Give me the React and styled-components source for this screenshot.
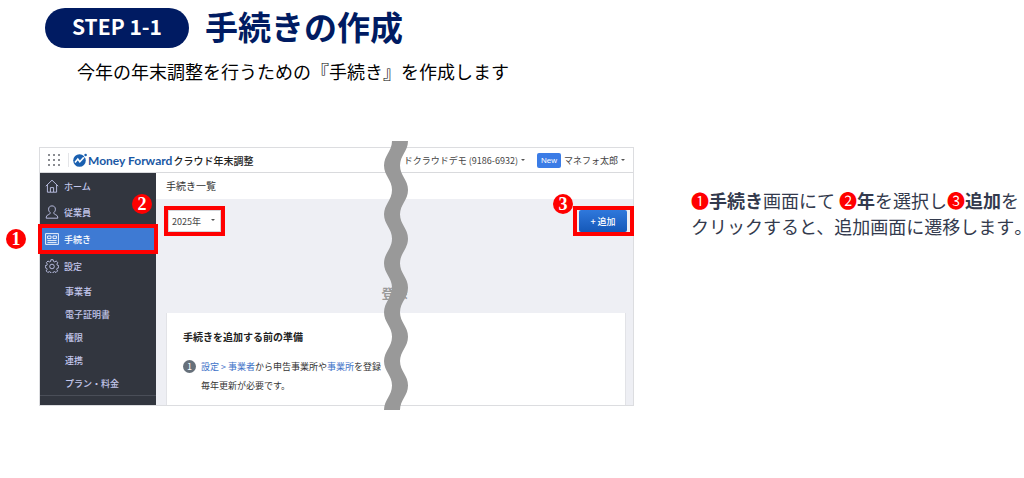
import styled, { createGlobalStyle, css } from 'styled-components';

const mainNav = [
  { id: 'home', label: 'ホーム' },
  { id: 'staff', label: '従業員' },
  { id: 'procedure', label: '手続き', active: true },
  { id: 'settings', label: '設定' },
];

const subNav = ['事業者', '電子証明書', '権限', '連携', 'プラン・料金'];

const icons = {
  home: (
    <>
      <path d="M0.8 7.2 7 1.2l6.2 6" />
      <path d="M2.4 6v7.2h9.2V6" />
      <path d="M5.4 13V8.6h3.2V13" />
    </>
  ),
  staff: (
    <>
      <path d="M5.2 7.6C3.9 6.6 3.6 5.2 3.6 4.2 3.6 2 5.1 0.9 7 0.9s3.4 1.1 3.4 3.3c0 1-.3 2.4-1.6 3.4" />
      <path d="M5.2 7.6c0 1.2-.6 1.7-2 2.2C1.6 10.4 1.3 11.4 1.2 13.2h11.6c-.1-1.8-.4-2.8-2-3.4-1.4-.5-2-1-2-2.2" />
    </>
  ),
  procedure: (
    <>
      <path d="M0.6 1.6h12.8v10.8H0.6z" />
      <path d="M2.6 4h3.4v2.6H2.6zM8 4h3.4v2.6H8z" />
      <path d="M2.4 8.6h9.2M2.4 10.6h9.2" />
    </>
  ),
  settings: (
    <>
      <path d="M5.9 0.7h2.2l.4 1.7 1.2.5 1.5-.9 1.6 1.6-.9 1.5.5 1.2 1.3.3v2.2l-1.5.4-.5 1.2.9 1.5-1.6 1.6-1.5-.9-1.2.5-.4 1.2H5.9l-.4-1.2-1.2-.5-1.5.9-1.6-1.6.9-1.5-.5-1.2-1.3-.4V6.6l1.5-.3.5-1.2-.9-1.5L3 2l1.5.9 1.2-.5z" />
      <circle cx="7" cy="7.5" r="2.3" />
    </>
  ),
};

// One wavy band: every half period the edge swings between left and right.
const HALF = 24.5;
const wavePath = () => {
  let d = 'M8 0';
  for (let i = 0; i < 11; i += 1) {
    const from = i % 2 ? 0 : 8;
    const to = i % 2 ? 8 : 0;
    const y = i * HALF;
    d += `C${from} ${y + 10} ${to} ${y + HALF - 10} ${to} ${y + HALF}`;
  }
  d += 'H16';
  for (let i = 10; i >= 0; i -= 1) {
    const from = i % 2 ? 24 : 16;
    const to = i % 2 ? 16 : 24;
    const y = i * HALF;
    d += `C${from} ${y + HALF - 10} ${to} ${y + 10} ${to} ${y}`;
  }
  return `${d}Z`;
};

const App = () => (
  <>
    <GlobalStyle />
    <Page>
      <Header>
        <Step>STEP 1-1</Step>
        <Title>手続きの作成</Title>
      </Header>
      <Lead>今年の年末調整を行うための『手続き』を作成します</Lead>
      <Body>
        <Frame>
          <TopBar>
            <AppsButton type="button" aria-label="アプリ">
              <svg width="14" height="14" viewBox="0 0 14 14" fill="#8b8d92">
                {[1, 6, 11].map((y) =>
                  [1, 6, 11].map((x) => (
                    <rect key={`${x}-${y}`} x={x} y={y} width="2" height="2" />
                  ))
                )}
              </svg>
            </AppsButton>
            <Brand href="#top">
              <svg width="15" height="14" viewBox="0 0 15 14">
                <circle cx="6.5" cy="7.5" r="6.3" fill="#1a60b0" />
                <path d="M9.8 0 15 0v5.5l-3.4-.8z" fill="#fff" />
                <path d="M2 9.6 4.8 6l2 2.8 4-4.4" fill="none" stroke="#fff" strokeWidth="1.6" />
                <circle cx="12.6" cy="2" r="1.3" fill="#1a60b0" />
              </svg>
              <BrandName>Money Forward</BrandName>
              <Product>クラウド年末調整</Product>
            </Brand>
            <Account>
              <MenuButton type="button">
                ドクラウドデモ (9186-6932)
                <Caret />
              </MenuButton>
              <NewTag>New</NewTag>
              <MenuButton type="button">
                マネフォ太郎
                <Caret />
              </MenuButton>
            </Account>
          </TopBar>
          <Columns>
            <Sidebar>
              {mainNav.map(({ id, label, active }) => (
                <NavItem key={id} href={`#${id}`} $active={active}>
                  <NavIcon viewBox="0 0 14 14">{icons[id]}</NavIcon>
                  {label}
                  {active && <Badge $left={-34} $top={4}>1</Badge>}
                </NavItem>
              ))}
              <SubNav>
                {subNav.map((label) => (
                  <SubItem key={label} href="#settings">{label}</SubItem>
                ))}
              </SubNav>
            </Sidebar>
            <Main>
              <PageTitle>手続き一覧</PageTitle>
              <Toolbar>
                <Highlight>
                  <YearSelect aria-label="年" defaultValue="2025">
                    <option value="2025">2025年</option>
                  </YearSelect>
                  <SelectCaret />
                  <Badge $left={-36} $top={-16}>2</Badge>
                </Highlight>
                <Highlight $wide>
                  <AddButton type="button">+ 追加</AddButton>
                  <Badge $left={-24} $top={-16}>3</Badge>
                </Highlight>
              </Toolbar>
              <Empty>登録</Empty>
              <Card>
                <CardTitle>手続きを追加する前の準備</CardTitle>
                <Preparation>
                  <Count>1</Count>
                  <p>
                    <a href="#office">設定 &gt; 事業者</a>から申告事業所や<a href="#branch">事業所</a>を登録
                    <br />
                    毎年更新が必要です。
                  </p>
                </Preparation>
              </Card>
            </Main>
          </Columns>
          <Wave viewBox="0 0 24 269.5" preserveAspectRatio="none" aria-hidden="true">
            <path d={wavePath()} fill="#999" />
          </Wave>
        </Frame>
        <Note>
          <Mark>❶</Mark><b>手続き</b>画面にて <Mark>❷</Mark><b>年</b>を選択し<Mark>❸</Mark><b>追加</b>を
          <br />
          クリックすると、追加画面に遷移します<Stop>。</Stop>
        </Note>
      </Body>
    </Page>
  </>
);

const GlobalStyle = createGlobalStyle`
  * {
    box-sizing: border-box;
  }
  body {
    margin: 0;
    background: #ffffff;
    font-family: "Noto Sans CJK JP", sans-serif;
  }
  h1, h2, h3, p {
    margin: 0;
  }
  a {
    text-decoration: none;
  }
  button, select {
    font-family: inherit;
  }
`;

const Page = styled.main`
  padding: 8px 0 24px;
`;

const Header = styled.header`
  display: flex;
  align-items: flex-start;
  gap: 16px;
  padding-left: 45px;
`;

const Step = styled.span`
  padding: 0 27px 4px;
  border-radius: 20px;
  background: #001b62;
  color: #ffffff;
  font-size: 21px;
  font-weight: 700;
  line-height: 36px;
`;

const Title = styled.h1`
  color: #001b62;
  font-size: 33px;
  font-weight: 700;
  line-height: 36px;
`;

const Lead = styled.p`
  margin-top: 10px;
  padding-left: 77px;
  color: #000000;
  font-size: 18px;
  line-height: 26px;
`;

const Body = styled.div`
  display: grid;
  grid-template-columns: minmax(0, 595fr) minmax(0, 333fr);
  gap: 57px;
  align-items: start;
  margin-top: 63px;
  padding-left: 39px;
`;

const Frame = styled.section`
  position: relative;
  border: 1px solid #dcdde0;
  background: #ffffff;
`;

const TopBar = styled.div`
  display: flex;
  align-items: center;
  height: 25px;
  padding: 0 8px 0 7px;
  border-bottom: 1px solid #d9dadd;
`;

const AppsButton = styled.button`
  display: flex;
  padding: 0 7px 0 0;
  border: 0;
  border-right: 1px solid #e4e5e8;
  background: none;
`;

const Brand = styled.a`
  display: flex;
  align-items: center;
  padding-left: 4px;
  white-space: nowrap;
`;

const BrandName = styled.span`
  margin-right: 1px;
  color: #1a58a4;
  font-family: Lato, sans-serif;
  font-size: 12px;
  font-weight: 700;
`;

const Product = styled.span`
  color: #222222;
  font-size: 10px;
  font-weight: 500;
`;

const Account = styled.div`
  display: flex;
  align-items: center;
  margin-left: auto;
  white-space: nowrap;
`;

const MenuButton = styled.button`
  display: flex;
  align-items: center;
  gap: 3px;
  padding: 0;
  border: 0;
  background: none;
  color: #444444;
  font-size: 9px;
`;

const caretShape = css`
  border: 2px solid transparent;
  border-top-color: #555555;
  border-bottom: 0;
`;

const Caret = styled.span`
  ${caretShape}
`;

const NewTag = styled.span`
  margin: 0 3px 0 12px;
  padding: 0 4px;
  border-radius: 2px;
  background: #3b7ce6;
  color: #ffffff;
  font-family: "Liberation Sans", sans-serif;
  font-size: 8px;
  line-height: 15px;
`;

const Columns = styled.div`
  display: flex;
`;

const Sidebar = styled.nav`
  flex: none;
  width: 116px;
  padding-bottom: 9px;
  background: #32363f;
`;

const NavItem = styled.a`
  position: relative;
  display: flex;
  align-items: center;
  gap: 5px;
  height: ${({ $active }) => ($active ? 28 : 26)}px;
  padding-left: 5px;
  background: ${({ $active }) => ($active ? '#3e7ad3' : 'none')};
  color: ${({ $active }) => ($active ? '#ffffff' : '#c3c7ec')};
  font-size: 9px;
  font-weight: 500;
  ${({ $active }) =>
    $active &&
    css`
      &::after {
        content: '';
        position: absolute;
        inset: -1px -2px;
        border: 4px solid #ff0000;
      }
    `}
`;

const NavIcon = styled.svg`
  width: 14px;
  height: 14px;
  fill: none;
  stroke: currentColor;
  stroke-width: 0.9;
`;

const SubNav = styled.div`
  padding-top: 1px;
  border-bottom: 1px solid #4a4e58;
`;

const SubItem = styled.a`
  display: block;
  padding-left: 25px;
  color: #c3c7ec;
  font-size: 9px;
  font-weight: 500;
  line-height: 23px;
`;

const Main = styled.div`
  display: flex;
  flex: 1;
  flex-direction: column;
  min-width: 0;
  background: #eeeff4;
`;

const PageTitle = styled.h2`
  padding-left: 10px;
  background: #ffffff;
  color: #333333;
  font-size: 10px;
  font-weight: 400;
  line-height: 26px;
`;

const Toolbar = styled.div`
  display: flex;
  justify-content: space-between;
  margin-right: -1px;
  padding: 7px 0 0 8px;
`;

const Highlight = styled.div`
  position: relative;
  padding: ${({ $wide }) => ($wide ? '0 3px 0 2px' : '0')};
  border: 4px solid #ff0000;
`;

const YearSelect = styled.select`
  display: block;
  width: 53px;
  height: 22px;
  padding: 0 3px;
  border: 1px solid #d5d6da;
  border-radius: 0;
  appearance: none;
  background: #ffffff;
  color: #444444;
  font-size: 9px;
`;

const SelectCaret = styled.span`
  ${caretShape}
  position: absolute;
  top: 9px;
  right: 6px;
  pointer-events: none;
`;

const AddButton = styled.button`
  display: block;
  width: 48px;
  height: 22px;
  padding: 0;
  border: 0;
  border-radius: 2px;
  background: linear-gradient(#2f78dc, #1558b8);
  color: #ffffff;
  font-size: 9px;
  font-weight: 500;
`;

const Badge = styled.span`
  position: absolute;
  top: ${({ $top }) => $top}px;
  left: ${({ $left }) => $left}px;
  z-index: 1;
  width: 20px;
  height: 20px;
  border-radius: 50%;
  background: #ff0000;
  color: #ffffff;
  font-family: "Liberation Serif", serif;
  font-size: 18px;
  font-weight: 700;
  line-height: 20px;
  text-align: center;
`;

const Empty = styled.p`
  flex: 1;
  padding: 47px 0 10px;
  color: #999999;
  font-size: 13px;
  font-weight: 700;
  line-height: 20px;
  text-align: center;
`;

const Card = styled.section`
  margin: 0 7px 0 10px;
  padding: 16px 16px 10px;
  border: 1px solid #e2e3e7;
  border-width: 0 1px;
  background: #ffffff;
`;

const CardTitle = styled.h3`
  color: #222222;
  font-size: 10px;
  font-weight: 700;
  line-height: 16px;
`;

const Preparation = styled.div`
  display: flex;
  gap: 5px;
  margin-top: 12px;
  color: #333333;
  font-size: 9px;
  line-height: 19px;
  a {
    color: #3e72c8;
  }
`;

const Count = styled.span`
  width: 13px;
  height: 13px;
  margin-top: 3px;
  border-radius: 50%;
  background: #66707a;
  color: #ffffff;
  line-height: 13px;
  text-align: center;
`;

const Wave = styled.svg`
  position: absolute;
  top: -7px;
  left: 58%;
  width: 24px;
  height: calc(100% + 12px);
`;

const Note = styled.p`
  padding-top: 40px;
  color: #333a4d;
  font-size: 18px;
  line-height: 26px;
  white-space: nowrap;
`;

const Mark = styled.span`
  color: #ff0000;
`;

// Half-width full stop at the end of the line
const Stop = styled.span`
  font-feature-settings: "halt";
`;

export default App;
